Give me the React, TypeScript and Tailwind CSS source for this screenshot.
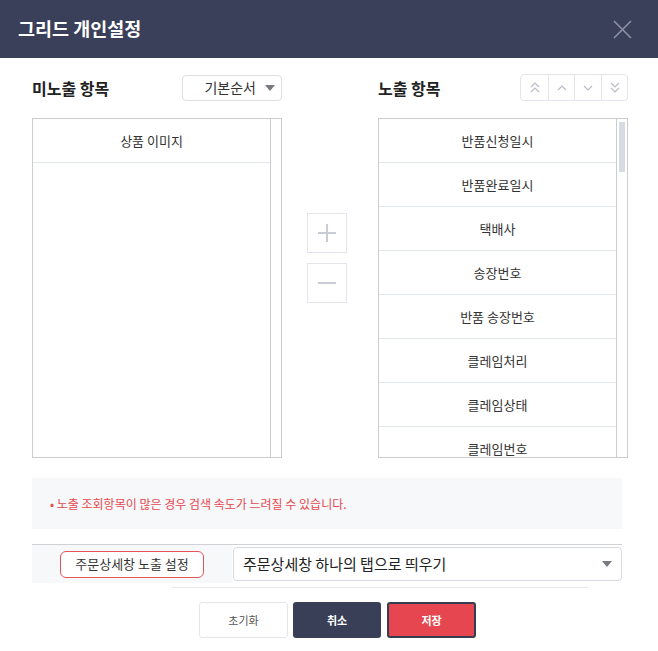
import React from "react"

const hidden = ["상품 이미지"]
const shown = ["반품신청일시", "반품완료일시", "택배사", "송장번호", "반품 송장번호", "클레임처리", "클레임상태", "클레임번호"]

function Chevron({ dir, double }: { dir: "up" | "down"; double?: boolean }) {
  const one = dir === "up" ? "M1 5 L5 1 L9 5" : "M1 1 L5 5 L9 1"
  return (
    <svg width="10" height={double ? 11 : 6} viewBox={double ? "0 0 10 11" : "0 0 10 6"} fill="none" stroke="#b9bdc7" strokeWidth="1.2">
      <path d={one} />
      {double && <path d={dir === "up" ? "M1 10 L5 6 L9 10" : "M1 6 L5 10 L9 6"} />}
    </svg>
  )
}

function Triangle() {
  return (
    <svg width="10" height="6" viewBox="0 0 10 6">
      <path d="M0 0 H10 L5 6 Z" fill="#777a82" />
    </svg>
  )
}

function ListBox({ items, thumb }: { items: string[]; thumb?: boolean }) {
  return (
    <div className="flex h-[340px] border border-[#cbcdd1] bg-white">
      <div className="flex-1 overflow-hidden">
        {items.map((t) => (
          <div key={t} className="flex h-[44px] items-center justify-center border-b border-[#e2e6ee] text-[13px] text-[#333]">
            {t}
          </div>
        ))}
      </div>
      <div className="w-[11px] border-l border-[#cbcdd1] pt-[3px] pl-[2px]">
        {thumb && <div className="h-[50px] w-[6px] bg-[#d9dbe3]" />}
      </div>
    </div>
  )
}

export default function App() {
  return (
    <div className="h-[651px] w-[658px] overflow-hidden bg-white font-['Noto_Sans_CJK_KR','Noto_Sans',sans-serif]">
      {/* header */}
      <div className="flex h-[58px] items-center justify-between bg-[#3a4059] pl-[18px] pr-[26px]">
        <h1 className="text-[18.5px] font-bold text-white">그리드 개인설정</h1>
        <svg width="19" height="19" viewBox="0 0 19 19" stroke="#8c91a4" strokeWidth="1.6">
          <path d="M1 1 L18 18 M18 1 L1 18" />
        </svg>
      </div>

      <div className="flex pl-[32px] pt-[16px]">
        {/* hidden items */}
        <div className="w-[250px]">
          <div className="flex h-[27px] items-center justify-between">
            <span className="text-[16px] font-bold text-[#222]">미노출 항목</span>
            <button className="flex h-[26px] w-[100px] items-center justify-end gap-[9px] rounded-[4px] border border-[#dcdfe6] pr-[6px] text-[14px] text-[#333]">
              기본순서
              <Triangle />
            </button>
          </div>
          <div className="mt-[17px]">
            <ListBox items={hidden} />
          </div>
        </div>

        {/* move buttons */}
        <div className="ml-[25px] mt-[139px] flex w-[40px] flex-col gap-[10px]">
          <button className="flex h-[40px] items-center justify-center border border-[#e2e5eb]">
            <svg width="18" height="18" viewBox="0 0 18 18" stroke="#c9ccd3" strokeWidth="2">
              <path d="M9 0 V18 M0 9 H18" />
            </svg>
          </button>
          <button className="flex h-[40px] items-center justify-center border border-[#e2e5eb]">
            <svg width="18" height="18" viewBox="0 0 18 18" stroke="#c9ccd3" strokeWidth="2">
              <path d="M0 9 H18" />
            </svg>
          </button>
        </div>

        {/* shown items */}
        <div className="ml-[31px] w-[250px]">
          <div className="flex h-[27px] items-center justify-between">
            <span className="text-[16px] font-bold text-[#222]">노출 항목</span>
            <div className="flex h-[27px] rounded-[4px] border border-[#e2e5eb]">
              <button className="flex w-[27px] items-center justify-center"><Chevron dir="up" double /></button>
              <button className="flex w-[26px] items-center justify-center border-l border-[#e2e5eb]"><Chevron dir="up" /></button>
              <button className="flex w-[27px] items-center justify-center border-l border-[#e2e5eb]"><Chevron dir="down" /></button>
              <button className="flex w-[26px] items-center justify-center border-l border-[#e2e5eb]"><Chevron dir="down" double /></button>
            </div>
          </div>
          <div className="mt-[17px]">
            <ListBox items={shown} thumb />
          </div>
        </div>
      </div>

      <div className="ml-[32px] w-[590px]">
        {/* notice */}
        <div className="mt-[20px] flex h-[51px] items-center bg-[#f7f8fa] pl-[18px] text-[12px] text-[#e5484f]">
          • 노출 조회항목이 많은 경우 검색 속도가 느려질 수 있습니다.
        </div>

        {/* order detail setting */}
        <div className="mt-[15px] flex border-t border-[#cfd1d5]">
          <div className="flex h-[38px] w-[200px] items-center justify-center bg-[#f7f8fa]">
            <span className="flex h-[27px] items-center rounded-[6px] border-[1.5px] border-[#e5535b] bg-white px-[14px] text-[13px] text-[#333]">
              주문상세창 노출 설정
            </span>
          </div>
          <div className="ml-px mt-[2px] flex h-[34px] flex-1 items-center justify-between rounded-[4px] border border-[#d8dae2] pl-[9px] pr-[9px] text-[15px] text-[#222]">
            주문상세창 하나의 탭으로 띄우기
            <Triangle />
          </div>
        </div>
        <div className="ml-[140px] mt-[4px] h-px w-[416px] bg-[#e6e8ed]" />
      </div>

      {/* footer buttons */}
      <div className="mt-[14px] flex gap-[5px] pl-[199px]">
        <button className="h-[36px] w-[89px] rounded-[3px] border border-[#e4e6ec] bg-white text-[11px] text-[#555]">초기화</button>
        <button className="h-[36px] w-[88px] rounded-[3px] bg-[#393f57] text-[11px] font-bold text-white">취소</button>
        <button className="ml-px h-[36px] w-[89px] rounded-[3px] border-2 border-[#363c52] bg-[#e5464f] text-[11px] font-bold text-white">저장</button>
      </div>
    </div>
  )
}
